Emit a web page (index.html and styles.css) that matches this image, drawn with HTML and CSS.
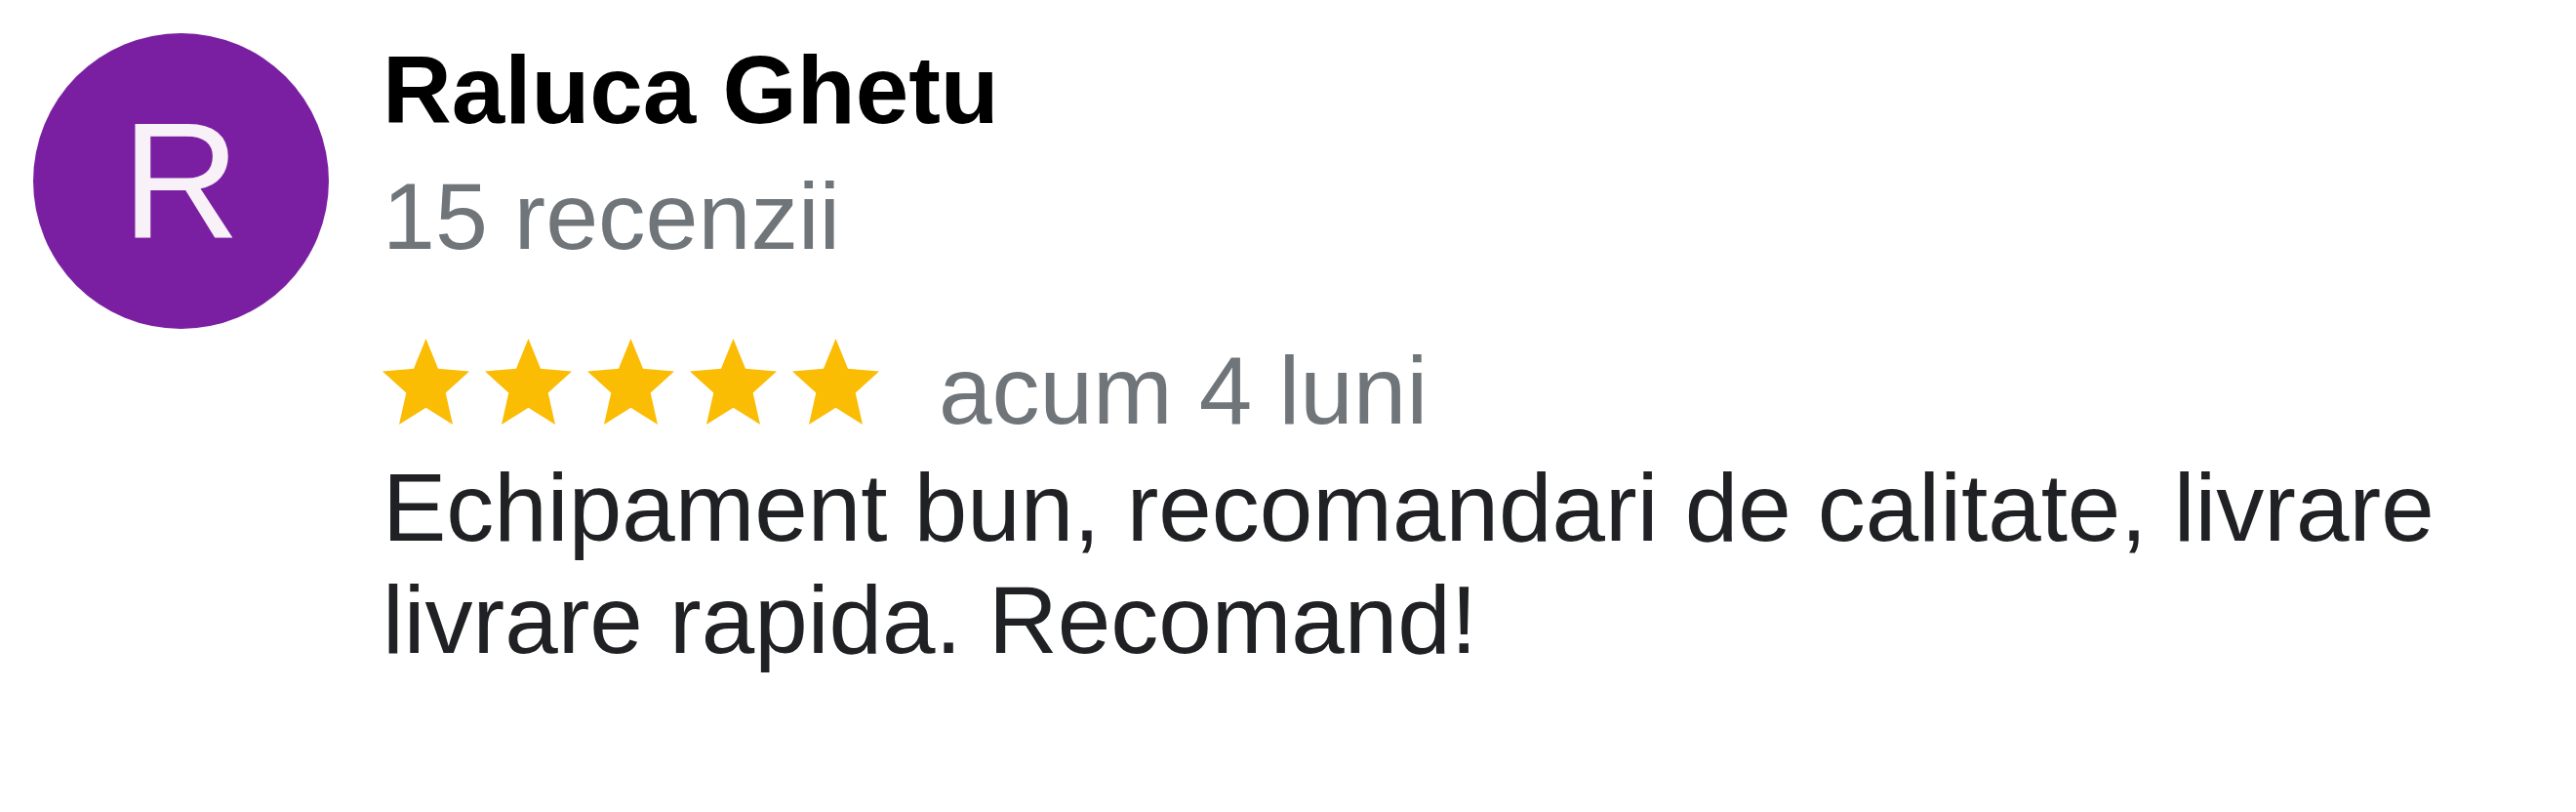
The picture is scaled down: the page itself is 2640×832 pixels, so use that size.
FILE: index.html
```html
<!DOCTYPE html>
<html lang="ro">
<head>
    <meta charset="UTF-8">
    <meta name="viewport" content="width=device-width, initial-scale=1.0">
    <title>Recenzie</title>
    <link rel="stylesheet" href="styles.css">
</head>
<body>
    <div class="review">
        <div class="avatar">R</div>

        <div class="review-body">
            <div class="author">Raluca Ghetu</div>
            <div class="count">15 recenzii</div>

            <div class="meta">
                <span class="stars">
                    <svg class="star" viewBox="2 2 20 19" preserveAspectRatio="none"><polygon points="12,17.27 18.18,21 16.54,13.97 22,9.24 14.81,8.62 12,2 9.19,8.62 2,9.24 7.46,13.97 5.82,21"/></svg>
                    <svg class="star" viewBox="2 2 20 19" preserveAspectRatio="none"><polygon points="12,17.27 18.18,21 16.54,13.97 22,9.24 14.81,8.62 12,2 9.19,8.62 2,9.24 7.46,13.97 5.82,21"/></svg>
                    <svg class="star" viewBox="2 2 20 19" preserveAspectRatio="none"><polygon points="12,17.27 18.18,21 16.54,13.97 22,9.24 14.81,8.62 12,2 9.19,8.62 2,9.24 7.46,13.97 5.82,21"/></svg>
                    <svg class="star" viewBox="2 2 20 19" preserveAspectRatio="none"><polygon points="12,17.27 18.18,21 16.54,13.97 22,9.24 14.81,8.62 12,2 9.19,8.62 2,9.24 7.46,13.97 5.82,21"/></svg>
                    <svg class="star" viewBox="2 2 20 19" preserveAspectRatio="none"><polygon points="12,17.27 18.18,21 16.54,13.97 22,9.24 14.81,8.62 12,2 9.19,8.62 2,9.24 7.46,13.97 5.82,21"/></svg>
                </span>
                <span class="date">acum 4 luni</span>
            </div>

            <p class="text">Echipament bun, recomandari de calitate, livrare livrare rapida. Recomand!</p>
        </div>
    </div>
</body>
</html>
```

FILE: styles.css
```css
/* ページ全体 */
body {
    margin: 0;
    background-color: #ffffff;
    font-family: "Liberation Sans", Arial, sans-serif;
}

/* レビューカード */
.review {
    display: flex;
    align-items: flex-start;
    gap: 55px;
    padding: 34px 0 0 34px;
}

/* アバター */
.avatar {
    flex: none;
    width: 303px;
    height: 303px;
    border-radius: 50%;
    background-color: #7b1fa2;
    color: #f8f2f8;
    font-size: 168px;
    line-height: 303px;
    text-align: center;
}

.review-body {
    padding-top: 2px;
}

.author {
    font-size: 98px;
    font-weight: bold;
    line-height: 112px;
    color: #000000;
}

.count {
    margin-top: 18px;
    font-size: 97px;
    line-height: 112px;
    color: #70757a;
}

/* 星と日付 */
.meta {
    display: flex;
    align-items: flex-start;
    gap: 61px;
    margin-top: 66px;
}

.stars {
    display: flex;
    gap: 16px;
    margin-top: 3px;
}

.star {
    width: 89px;
    height: 88px;
    fill: #fbbc04;
}

.date {
    font-size: 98px;
    line-height: 112px;
    color: #70757a;
}

/* 本文 */
.text {
    margin: 7px 0 0 0;
    font-size: 98px;
    line-height: 115px;
    color: #202124;
}
```
